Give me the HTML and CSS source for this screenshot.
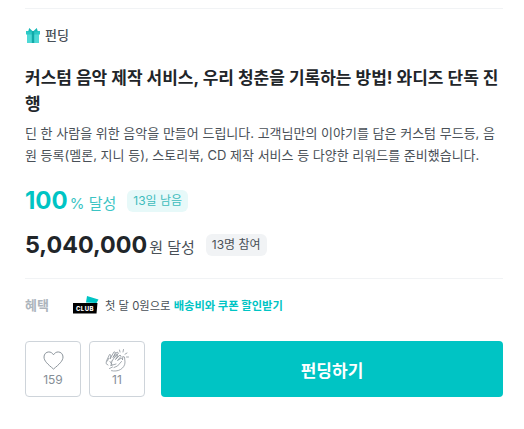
FILE: index.html
```html
<!DOCTYPE html>
<html lang="ko">
<head>
<meta charset="utf-8">
<title>펀딩</title>
<link rel="stylesheet" href="styles.css">
</head>
<body>
<main class="panel">
  <div class="category">
    <svg class="gift" viewBox="0 0 14 15" width="14" height="15" aria-hidden="true">
      <rect x="1" y="6" width="12" height="9" fill="#4fd9d6"/>
      <rect x="0" y="3" width="14" height="3.500" fill="#2cc9c6"/>
      <rect x="5.800" y="3" width="2.400" height="12" fill="#12a9a8"/>
      <path d="M7 3.500 3.200 0 2.200 3.500zM7 3.500 10.800 0 11.800 3.500z" fill="#17b8b6"/>
    </svg>
    <span>펀딩</span>
  </div>
  <h1 class="title">커스텀 음악 제작 서비스, 우리 청춘을 기록하는 방법! 와디즈 단독 진행</h1>
  <p class="desc">딘 한 사람을 위한 음악을 만들어 드립니다. 고객님만의 이야기를 담은 커스텀 무드등, 음원 등록(멜론, 지니 등), 스토리북, CD 제작 서비스 등 다양한 리워드를 준비했습니다.</p>
  <div class="stat stat-rate">
    <strong class="rate">100</strong>
    <span class="rate-unit">% 달성</span>
    <span class="tag tag-mint">13일 남음</span>
  </div>
  <div class="stat stat-amount">
    <strong class="amount">5,040,000</strong>
    <span class="amount-unit">원 달성</span>
    <span class="tag tag-grey">13명 참여</span>
  </div>
  <div class="benefit">
    <span class="benefit-label">혜택</span>
    <svg class="club" viewBox="0 0 26 18" width="26" height="18" aria-hidden="true">
      <path d="M13 6.500 14 0 25.500 3.500 23.500 7z" fill="#00c4c4"/>
      <path d="M0 7H24.500L23.500 17.500H0z" fill="#000"/>
      <text x="3" y="14.800" class="club-text">CLUB</text>
    </svg>
    <span class="benefit-text">첫 달 0원으로 <b>배송비와 쿠폰 할인받기</b></span>
  </div>
  <div class="actions">
    <button class="icon-btn" type="button">
      <svg class="heart" viewBox="0 0 22 20" width="21" height="19" aria-hidden="true">
        <path d="M11 19C5 14 1 10.500 1 6.300 1 3.200 3.300 1 6 1c2 0 3.800 1 5 3 1.200-2 3-3 5-3 2.700 0 5 2.200 5 5.300C21 10.500 17 14 11 19z" fill="none" stroke="#868e96" stroke-width="1"/>
      </svg>
      <span>159</span>
    </button>
    <button class="icon-btn" type="button">
      <svg class="clap" viewBox="0 0 24 23" width="24" height="23" aria-hidden="true">
        <g fill="none" stroke="#868e96" stroke-width=".75" stroke-linecap="round" stroke-linejoin="round">
          <path d="M3 16 1 14.500 1.500 12 4.500 5.500 6 6.200 5 10 9 2.800 10.500 3.500 8 8.500 12 3 13.500 4 10.500 8"/>
          <path d="M5 12.500 7 15.500M3.500 9.500 2.500 12"/>
          <path d="M7 12 11.500 5.500 13 6.500 10.500 10.500 15 6 16.200 7.200 12.500 11.500 16.500 9 17.500 10.500"/>
          <path d="M17.500 10.500 17.800 7.500 19.500 8 20 13c.2 3-1.800 6-4.500 7.500-3 1.700-6 1.800-9 1.200"/>
          <path d="M7 12 6 16.500M6 16.500 11 15M9 18.500 12.500 17 16.500 12.500M4.500 19.500 7.500 18"/>
          <path d="M14.500 1 15 3M18.500 .5 18 3M22 4 20 5.200M23.500 8 21.500 8"/>
        </g>
      </svg>
      <span>11</span>
    </button>
    <button class="cta" type="button">펀딩하기</button>
  </div>
</main>
</body>
</html>
```

FILE: styles.css
```css
* { box-sizing: border-box; }
html, body { margin: 0; padding: 0; background: #fff; }
body {
  width: 524px;
  height: 429px;
  overflow: hidden;
  font-family: Inter, "Noto Sans CJK KR", "Noto Sans", sans-serif;
  color: #212529;
}
.panel {
  margin: 8px 21px 0 25px;
  border-top: 1px solid #f1f3f5;
  padding-top: 16px;
}
.category {
  display: flex;
  align-items: center;
  gap: 5px;
  height: 18px;
  font-size: 13px;
  font-weight: 500;
  color: #495057;
}
.gift { display: block; margin: 3px 0 0 1px; }
.title {
  margin: 22px 0 0;
  font-size: 17px;
  line-height: 26px;
  font-weight: 700;
  color: #212529;
}
.desc {
  margin: 5px 0 0;
  font-size: 13px;
  line-height: 22px;
  color: #495057;
}
.stat { display: flex; align-items: baseline; }
.stat-rate { margin-top: 17px; height: 36px; }
.stat-amount { margin-top: 8px; height: 36px; }
.rate {
  font-size: 24px;
  line-height: 36px;
  font-weight: 700;
  color: #00c4c4;
}
.rate-unit {
  margin-left: 2px;
  font-size: 15px;
  color: #3cc4c4;
}
.amount {
  font-size: 23.300px;
  line-height: 36px;
  font-weight: 700;
  color: #212529;
}
.amount-unit {
  margin-left: 2px;
  font-size: 15px;
  color: #495057;
}
.tag {
  margin-left: 11px;
  padding: 0 6px;
  height: 22px;
  border-radius: 6px;
  font-size: 12px;
  line-height: 22px;
  align-self: center;
}
.tag-mint { background: #e7f9f9; color: #3cbcbc; }
.tag-grey { background: #f1f3f5; color: #495057; }
.benefit {
  display: flex;
  align-items: center;
  margin-top: 15px;
  border-top: 1px solid #f1f3f5;
  padding-bottom: 2px;
  height: 54px;
  font-size: 11.300px;
}
.benefit-label {
  width: 48px;
  font-size: 13px;
  font-weight: 700;
  color: #adb5bd;
}
.club { display: block; margin-right: 6px; }
.club-text {
  font-family: Inter, sans-serif;
  font-size: 6px;
  font-weight: 800;
  letter-spacing: .4px;
  fill: #fff;
}
.benefit-text { color: #495057; }
.benefit-text b { font-weight: 700; color: #00c4c4; }
.actions {
  display: flex;
  gap: 8px;
  margin-top: 9px;
}
.icon-btn {
  display: flex;
  flex-direction: column;
  align-items: center;
  width: 56px;
  height: 56px;
  padding: 9px 0 0;
  border: 1px solid #ced4da;
  border-radius: 4px;
  background: #fff;
  font: inherit;
  font-size: 12px;
  line-height: 14px;
  color: #868e96;
}
.heart { display: block; margin-bottom: 3px; }
.clap { display: block; margin: -2px 0 1px; }
.cta {
  flex: 1;
  height: 56px;
  margin-left: 8px;
  border: 0;
  border-radius: 4px;
  background: #00c4c4;
  color: #fff;
  font: inherit;
  font-size: 17px;
  font-weight: 700;
}
```
